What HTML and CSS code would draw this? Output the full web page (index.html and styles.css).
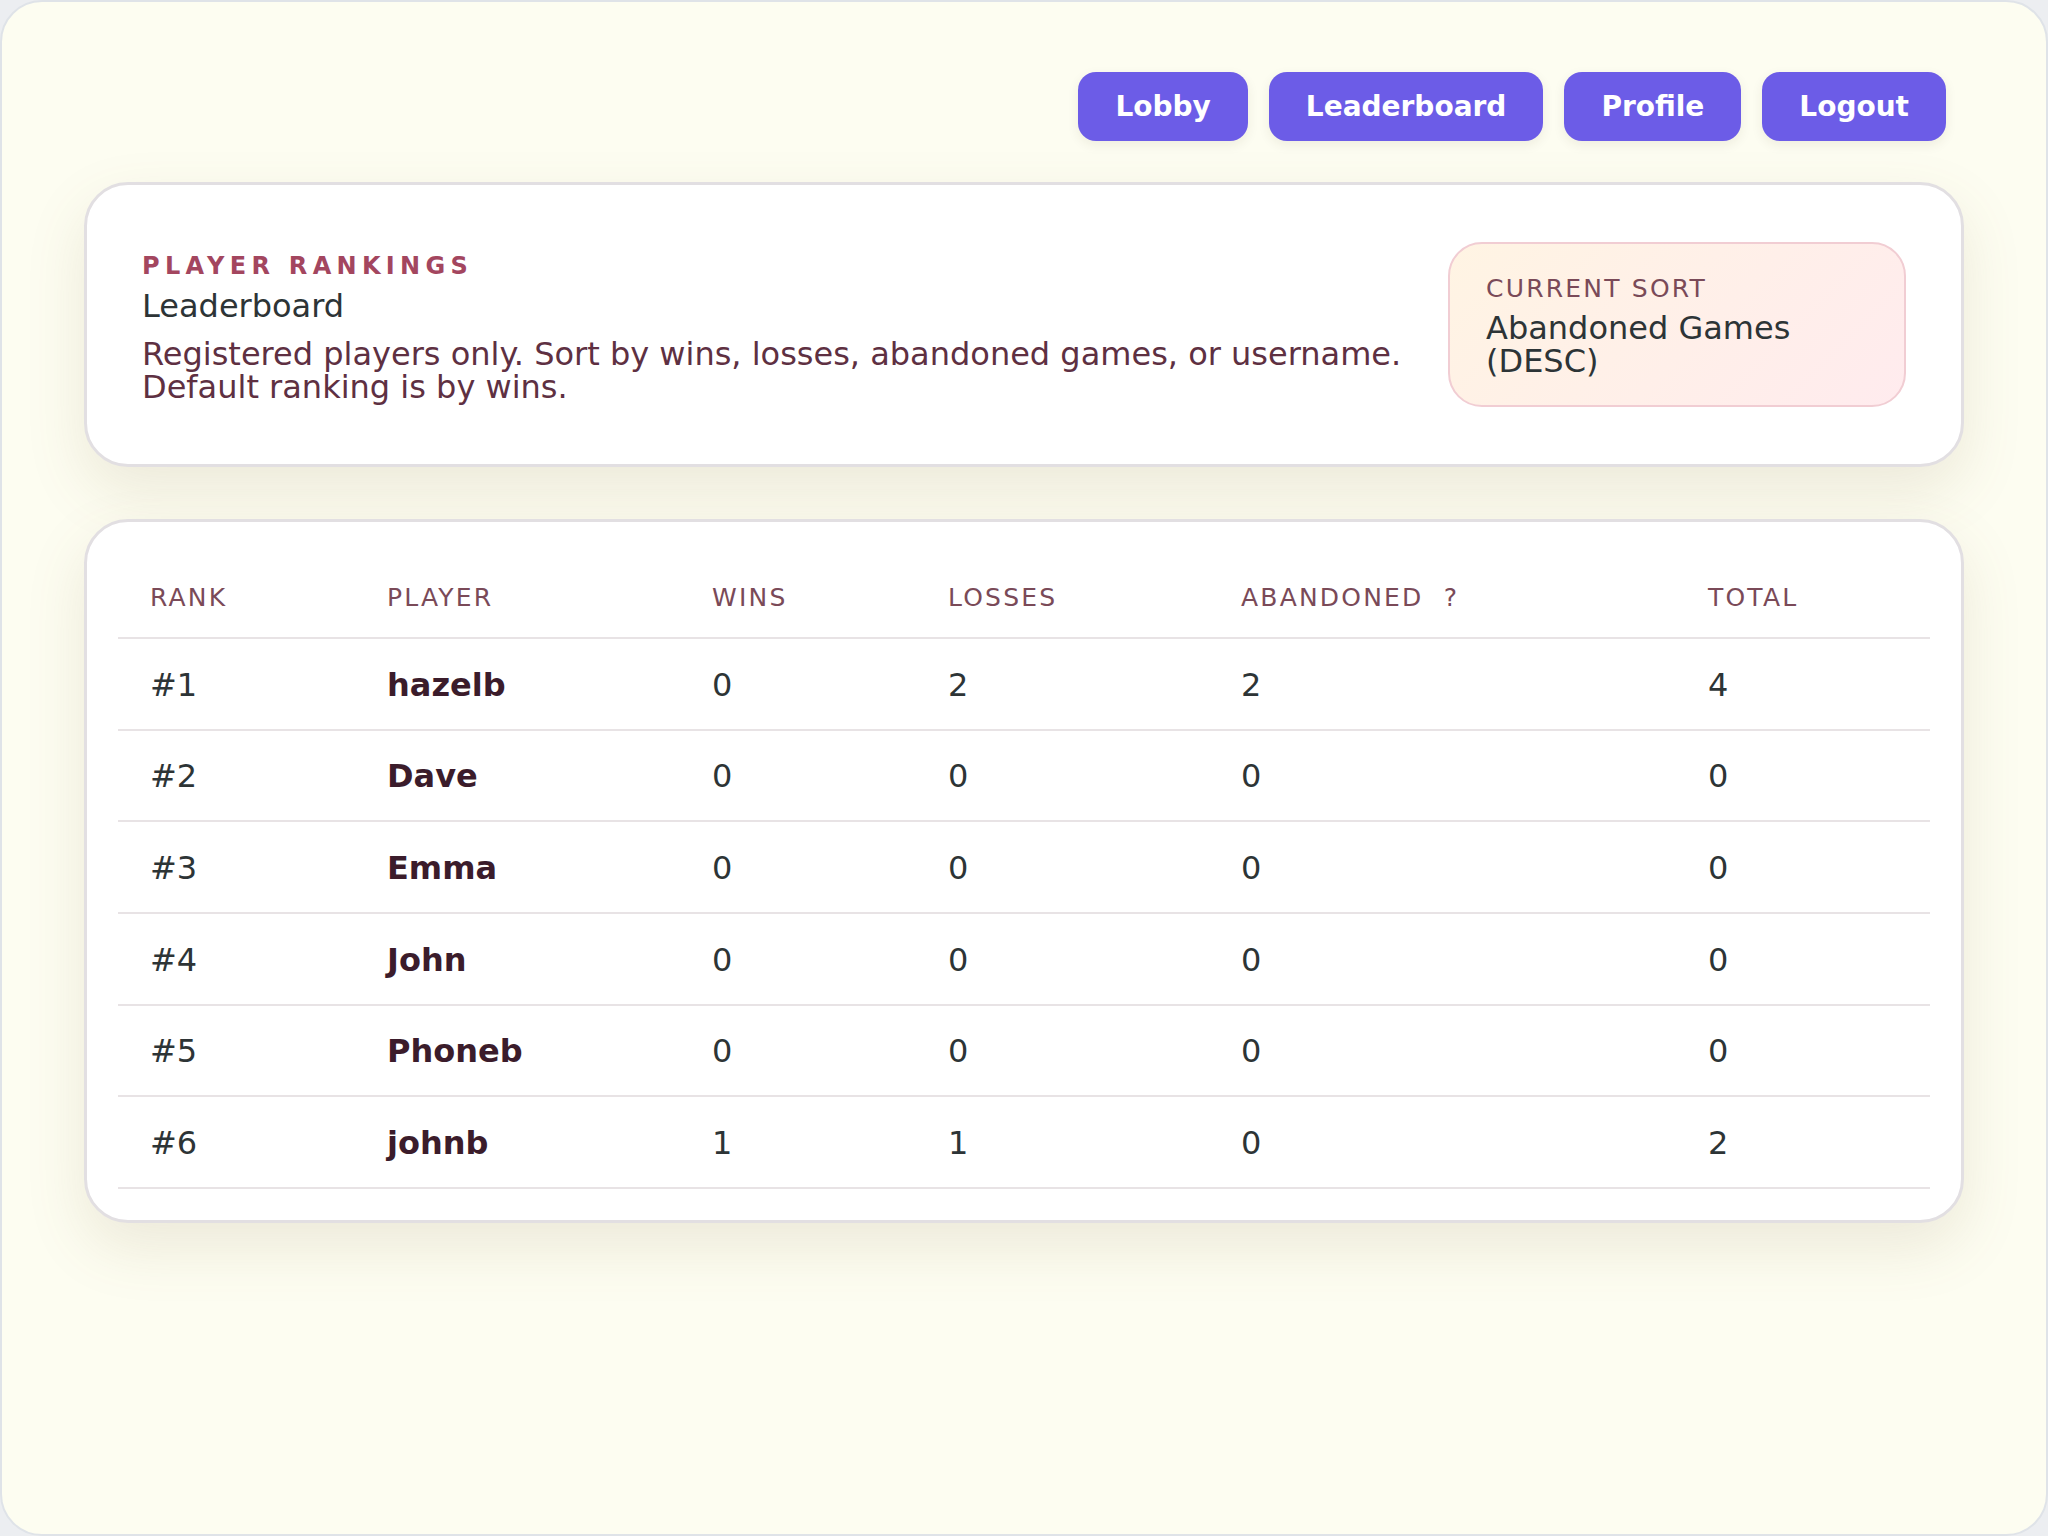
FILE: index.html
```html
<!DOCTYPE html>
<html>
<head>
<meta name="viewport" content="width=device-width, initial-scale=1">
<link rel="stylesheet" href="styles.css">
</head>
<body>

<div class="app">
  <nav class="nav">
    <button class="navbtn">Lobby</button>
    <button class="navbtn">Leaderboard</button>
    <button class="navbtn">Profile</button>
    <button class="navbtn">Logout</button>
  </nav>

  <section class="card intro">
    <div class="intro-text">
      <div class="eyebrow">Player Rankings</div>
      <h1 class="title">Leaderboard</h1>
      <p class="desc">Registered players only. Sort by wins, losses, abandoned games, or username.<br>Default ranking is by wins.</p>
    </div>
    <div class="sort-box">
      <div class="sort-label">Current Sort</div>
      <div class="sort-value">Abandoned Games (DESC)</div>
    </div>
  </section>

  <section class="card board">
    <table class="ranks">
      <colgroup>
        <col style="width:237px">
        <col style="width:325px">
        <col style="width:236px">
        <col style="width:293px">
        <col style="width:467px">
        <col>
      </colgroup>
      <thead>
        <tr>
          <th>Rank</th>
          <th>Player</th>
          <th>Wins</th>
          <th>Losses</th>
          <th>Abandoned <span class="hint">?</span></th>
          <th>Total</th>
        </tr>
      </thead>
      <tbody>
        <tr><td>#1</td><td class="name">hazelb</td><td>0</td><td>2</td><td>2</td><td>4</td></tr>
        <tr><td>#2</td><td class="name">Dave</td><td>0</td><td>0</td><td>0</td><td>0</td></tr>
        <tr><td>#3</td><td class="name">Emma</td><td>0</td><td>0</td><td>0</td><td>0</td></tr>
        <tr><td>#4</td><td class="name">John</td><td>0</td><td>0</td><td>0</td><td>0</td></tr>
        <tr><td>#5</td><td class="name">Phoneb</td><td>0</td><td>0</td><td>0</td><td>0</td></tr>
        <tr><td>#6</td><td class="name">johnb</td><td>1</td><td>1</td><td>0</td><td>2</td></tr>
      </tbody>
    </table>
  </section>
</div>

</body>
</html>
```

FILE: styles.css
```css
html, body {
    margin: 0;
    padding: 0;
}

body {
    font-family: "DejaVu Sans", Verdana, sans-serif;
    background-color: #eceef1;
    color: #2d3436;
}

/* Page frame */
.app {
    box-sizing: border-box;
    min-height: 100vh;
    padding: 70px 82px;
    background-color: #fdfdf1;
    border: 2px solid #dfe3e8;
    border-radius: 42px;
}

/* Top navigation */
.nav {
    display: flex;
    justify-content: flex-end;
    gap: 21px;
    padding-right: 18px;
    margin-bottom: 41px;
}

.navbtn {
    font-family: inherit;
    font-size: 28px;
    font-weight: bold;
    color: #ffffff;
    background-color: #6c5ce7;
    border: none;
    border-radius: 18px;
    padding: 18px 37px;
    line-height: normal;
    box-shadow: 0 4px 12px rgba(60, 50, 20, 0.08);
    cursor: pointer;
}

/* Cards */
.card {
    background-color: #ffffff;
    border: 3px solid #e2dfe2;
    border-radius: 44px;
    box-shadow: 0 24px 60px rgba(120, 100, 60, 0.13);
}

.intro {
    display: flex;
    align-items: center;
    justify-content: space-between;
    gap: 30px;
    padding: 57px 55px;
    margin-bottom: 52px;
}

.intro-text {
    padding-top: 6px;
}

.eyebrow {
    font-size: 24px;
    font-weight: bold;
    text-transform: uppercase;
    letter-spacing: 5.3px;
    color: #a3465f;
}

.title {
    margin: 7px 0 0 0;
    font-size: 32px;
    font-weight: normal;
    color: #2d3436;
}

.desc {
    margin: 13px 0 0 0;
    font-size: 32px;
    line-height: 32.6px;
    color: #5e3042;
    white-space: nowrap;
}

.sort-box {
    box-sizing: border-box;
    width: 458px;
    flex-shrink: 0;
    padding: 30px 36px 27px 36px;
    border: 2px solid #f1cdd3;
    border-radius: 34px;
    background: linear-gradient(135deg, #fff4e3 0%, #ffebee 100%);
}

.sort-label {
    font-size: 25px;
    text-transform: uppercase;
    letter-spacing: 2.2px;
    color: #7a4a58;
}

.sort-value {
    margin-top: 9px;
    font-size: 32px;
    line-height: 33px;
    color: #2d3436;
}

/* Leaderboard table */
.board {
    padding: 31px;
}

.ranks {
    width: 100%;
    table-layout: fixed;
    border-collapse: collapse;
    border-spacing: 0;
}

.ranks th {
    text-align: left;
    font-size: 25px;
    font-weight: normal;
    text-transform: uppercase;
    letter-spacing: 2.2px;
    color: #7a4a58;
    padding: 30px 32px 25px 32px;
    border-bottom: 2px solid #e8e3e5;
}

.hint {
    margin-left: 10px;
}

.ranks td {
    font-size: 32px;
    line-height: 37px;
    color: #2d3436;
    padding: 27.7px 32px 25px 32px;
    border-bottom: 2px solid #e8e3e5;
}

.ranks td.name {
    font-weight: bold;
    color: #3b1c2b;
}
```
